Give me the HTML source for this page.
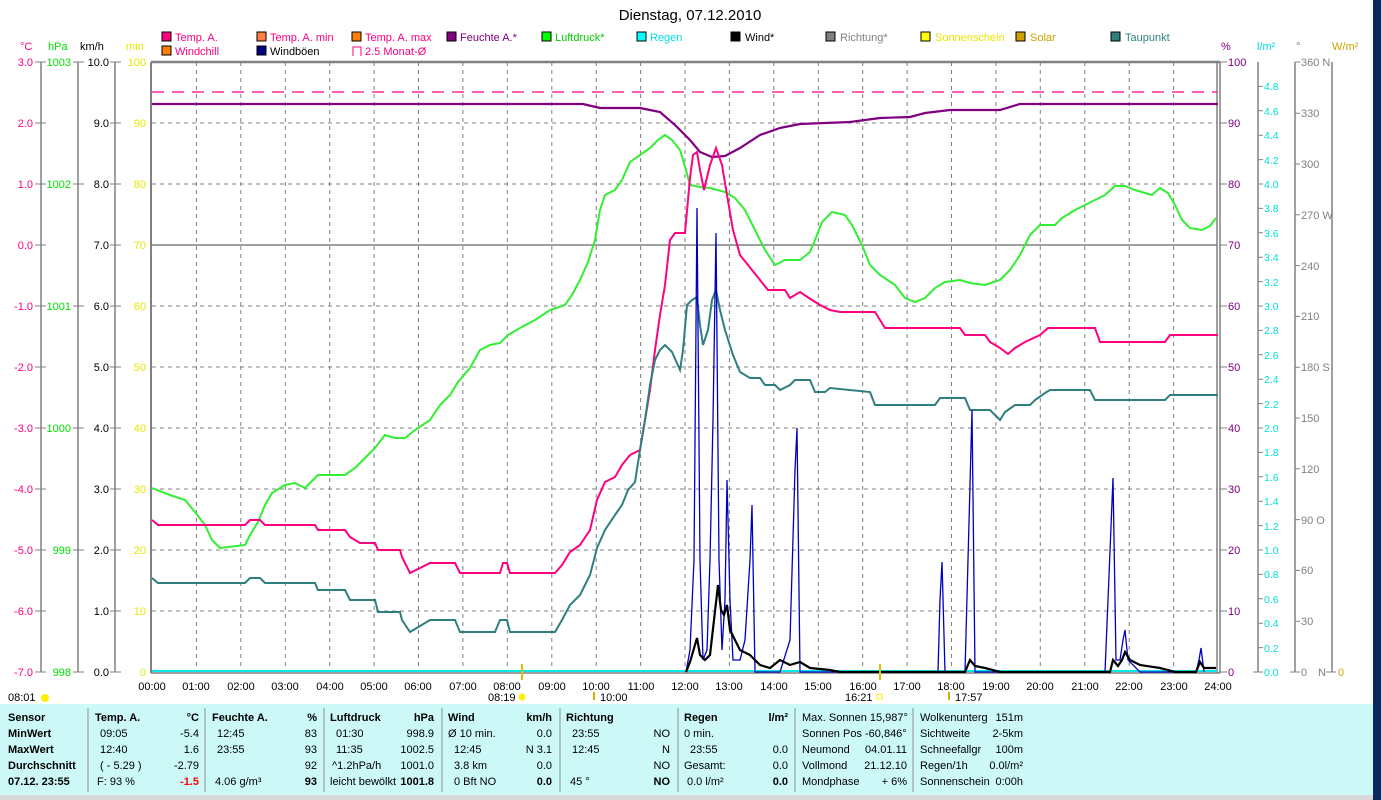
<!DOCTYPE html>
<html><head><meta charset="utf-8"><style>
html,body{margin:0;padding:0;background:#fff;width:1381px;height:800px;overflow:hidden}
svg{display:block;font-family:"Liberation Sans",sans-serif}
</style></head><body>
<svg width="1381" height="800" viewBox="0 0 1381 800" xmlns="http://www.w3.org/2000/svg" font-size="11">
<rect x="0" y="0" width="1381" height="800" fill="#fff"/>
<rect x="1373" y="0" width="8" height="800" fill="#0a2a5a"/>
<text x="690" y="20" font-size="15" text-anchor="middle">Dienstag, 07.12.2010</text>

<!-- legend -->
<g font-size="11">
<rect x="162" y="32" width="9" height="9" fill="#ff0080" stroke="#000"/><text x="175" y="41" fill="#ff0080">Temp. A.</text>
<rect x="257" y="32" width="9" height="9" fill="#ff8040" stroke="#000"/><text x="270" y="41" fill="#ff0080">Temp. A. min</text>
<rect x="352" y="32" width="9" height="9" fill="#ff8000" stroke="#000"/><text x="365" y="41" fill="#ff0080">Temp. A. max</text>
<rect x="447" y="32" width="9" height="9" fill="#800080" stroke="#000"/><text x="460" y="41" fill="#800080">Feuchte A.*</text>
<rect x="542" y="32" width="9" height="9" fill="#00ff00" stroke="#000"/><text x="555" y="41" fill="#00cc00">Luftdruck*</text>
<rect x="637" y="32" width="9" height="9" fill="#00ffff" stroke="#000"/><text x="650" y="41" fill="#00e0e0">Regen</text>
<rect x="731" y="32" width="9" height="9" fill="#000" stroke="#000"/><text x="745" y="41" fill="#000">Wind*</text>
<rect x="826" y="32" width="9" height="9" fill="#808080" stroke="#000"/><text x="840" y="41" fill="#808080">Richtung*</text>
<rect x="921" y="32" width="9" height="9" fill="#ffff00" stroke="#000"/><text x="935" y="41" fill="#e8e800">Sonnenschein</text>
<rect x="1016" y="32" width="9" height="9" fill="#d0a000" stroke="#000"/><text x="1030" y="41" fill="#d0a000">Solar</text>
<rect x="1111" y="32" width="9" height="9" fill="#2f7f7f" stroke="#000"/><text x="1125" y="41" fill="#2f7f7f">Taupunkt</text>
<rect x="162" y="46" width="9" height="9" fill="#ff8000" stroke="#000"/><text x="175" y="55" fill="#ff0080">Windchill</text>
<rect x="257" y="46" width="9" height="9" fill="#000080" stroke="#000"/><text x="270" y="55" fill="#000">Windböen</text>
<path d="M353 56V47H361V56" fill="none" stroke="#ff0080"/><text x="365" y="55" fill="#ff0080">2.5 Monat-Ø</text>
</g>

<!-- axis headers -->
<text x="20" y="50" fill="#ff0080">°C</text>
<text x="48" y="50" fill="#00dd00">hPa</text>
<text x="80" y="50" fill="#000">km/h</text>
<text x="126" y="50" fill="#e8e800">min</text>
<text x="1221" y="50" fill="#800080">%</text>
<text x="1257" y="50" fill="#00e0e0">l/m²</text>
<text x="1296" y="50" fill="#808080">°</text>
<text x="1332" y="50" fill="#d0a000">W/m²</text>

<!-- left axes -->
<g stroke="#808080" stroke-width="1.5">
<line x1="41" y1="62" x2="41" y2="672"/><line x1="78" y1="62" x2="78" y2="672"/><line x1="115" y1="62" x2="115" y2="672"/>
<line x1="1258" y1="62" x2="1258" y2="672"/><line x1="1295" y1="62" x2="1295" y2="672"/><line x1="1332" y1="62" x2="1332" y2="672"/>
</g>
<g font-size="11" text-anchor="end">
<g fill="#ff0080"><text x="33" y="66">3.0</text><text x="33" y="127">2.0</text><text x="33" y="188">1.0</text><text x="33" y="249">0.0</text><text x="33" y="310">-1.0</text><text x="33" y="371">-2.0</text><text x="33" y="432">-3.0</text><text x="33" y="493">-4.0</text><text x="33" y="554">-5.0</text><text x="33" y="615">-6.0</text><text x="33" y="676">-7.0</text></g>
<g fill="#00dd00"><text x="71" y="66">1003</text><text x="71" y="188">1002</text><text x="71" y="310">1001</text><text x="71" y="432">1000</text><text x="71" y="554">999</text><text x="71" y="676">998</text></g>
<g fill="#000"><text x="109" y="66">10.0</text><text x="109" y="127">9.0</text><text x="109" y="188">8.0</text><text x="109" y="249">7.0</text><text x="109" y="310">6.0</text><text x="109" y="371">5.0</text><text x="109" y="432">4.0</text><text x="109" y="493">3.0</text><text x="109" y="554">2.0</text><text x="109" y="615">1.0</text><text x="109" y="676">0.0</text></g>
<g fill="#e8e800"><text x="146" y="66">100</text><text x="146" y="127">90</text><text x="146" y="188">80</text><text x="146" y="249">70</text><text x="146" y="310">60</text><text x="146" y="371">50</text><text x="146" y="432">40</text><text x="146" y="493">30</text><text x="146" y="554">20</text><text x="146" y="615">10</text><text x="146" y="676">0</text></g>
</g>
<g stroke="#808080">
<path d="M35 62h11M35 123h11M35 184h11M35 245h11M35 306h11M35 367h11M35 428h11M35 489h11M35 550h11M35 611h11M35 672h11"/>
<path d="M73 62h11M73 184h11M73 306h11M73 428h11M73 550h11M73 672h11"/>
<path d="M110 62h11M110 123h11M110 184h11M110 245h11M110 306h11M110 367h11M110 428h11M110 489h11M110 550h11M110 611h11M110 672h11"/>
<path d="M1219 62h8M1219 123h8M1219 184h8M1219 245h8M1219 306h8M1219 367h8M1219 428h8M1219 489h8M1219 550h8M1219 611h8M1219 672h8"/>
<path d="M1253 672h10M1258 647.6h5M1258 623.2h5M1258 598.8h5M1258 574.4h5M1258 550h5M1258 525.6h5M1258 501.2h5M1258 476.8h5M1258 452.4h5M1258 428h5M1258 403.6h5M1258 379.2h5M1258 354.8h5M1258 330.4h5M1258 306h5M1258 281.6h5M1258 257.2h5M1258 232.8h5M1258 208.4h5M1258 184h5M1258 159.6h5M1258 135.2h5M1258 110.8h5M1258 86.4h5"/>
<path d="M1290 672h10M1295 621.2h5M1295 570.4h5M1295 519.6h5M1295 468.8h5M1295 418h5M1295 367.2h5M1295 316.4h5M1295 265.6h5M1295 214.8h5M1295 164h5M1295 113.2h5M1295 62h5M1326 672h10"/>
</g>
<g font-size="11">
<g fill="#800080"><text x="1228" y="66">100</text><text x="1228" y="127">90</text><text x="1228" y="188">80</text><text x="1228" y="249">70</text><text x="1228" y="310">60</text><text x="1228" y="371">50</text><text x="1228" y="432">40</text><text x="1228" y="493">30</text><text x="1228" y="554">20</text><text x="1228" y="615">10</text><text x="1228" y="676">0</text></g>
<g fill="#00e0e0" font-size="10.5"><text x="1264" y="676">0.0</text><text x="1264" y="652">0.2</text><text x="1264" y="627">0.4</text><text x="1264" y="603">0.6</text><text x="1264" y="578">0.8</text><text x="1264" y="554">1.0</text><text x="1264" y="530">1.2</text><text x="1264" y="505">1.4</text><text x="1264" y="481">1.6</text><text x="1264" y="456">1.8</text><text x="1264" y="432">2.0</text><text x="1264" y="408">2.2</text><text x="1264" y="383">2.4</text><text x="1264" y="359">2.6</text><text x="1264" y="334">2.8</text><text x="1264" y="310">3.0</text><text x="1264" y="286">3.2</text><text x="1264" y="261">3.4</text><text x="1264" y="237">3.6</text><text x="1264" y="212">3.8</text><text x="1264" y="188">4.0</text><text x="1264" y="164">4.2</text><text x="1264" y="139">4.4</text><text x="1264" y="115">4.6</text><text x="1264" y="90">4.8</text></g>
<g fill="#808080"><text x="1301" y="66">360 N</text><text x="1301" y="117">330</text><text x="1301" y="168">300</text><text x="1301" y="219">270 W</text><text x="1301" y="270">240</text><text x="1301" y="320">210</text><text x="1301" y="371">180 S</text><text x="1301" y="422">150</text><text x="1301" y="473">120</text><text x="1301" y="524">90  O</text><text x="1301" y="574">60</text><text x="1301" y="625">30</text><text x="1301" y="676">0</text><text x="1318" y="676">N</text></g>
<text x="1338" y="676" fill="#d0a000">0</text>
</g>

<!-- plot grid -->
<g stroke="#808080" stroke-dasharray="4,4" stroke-width="1">
<path d="M152 123H1217M152 184H1217M152 306H1217M152 367H1217M152 428H1217M152 489H1217M152 550H1217M152 611H1217"/>
<path d="M196.4 62V672M240.8 62V672M285.3 62V672M329.7 62V672M374.1 62V672M418.5 62V672M462.9 62V672M507.3 62V672M551.8 62V672M596.2 62V672M640.6 62V672M685 62V672M729.4 62V672M773.8 62V672M818.3 62V672M862.7 62V672M907.1 62V672M951.5 62V672M995.9 62V672M1040.3 62V672M1084.8 62V672M1129.2 62V672M1173.6 62V672"/>
</g>
<line x1="152" y1="245" x2="1217" y2="245" stroke="#808080" stroke-width="1.5"/>
<g stroke="#808080" fill="none">
<line x1="151" y1="62" x2="1220" y2="62" stroke-width="2.5"/>
<line x1="151" y1="62" x2="151" y2="673" stroke-width="2"/>
<line x1="1217" y1="62" x2="1217" y2="673" stroke-width="1.5"/>
<line x1="1220" y1="62" x2="1220" y2="673" stroke-width="1.5"/>
<line x1="151" y1="673" x2="1220" y2="673" stroke-width="1.5"/>
</g>
<line x1="152" y1="92" x2="1217" y2="92" stroke="#ff0080" stroke-dasharray="12,8" stroke-width="1.3"/>
<line x1="152" y1="671" x2="1217" y2="671" stroke="#00e8e8" stroke-width="2"/>

<!-- humidity -->
<polyline fill="none" stroke="#800080" stroke-width="2.2" points="152,104 583,104 600,108 640,108 660,112 675,125 690,140 700,152 712,157 725,156 740,148 760,135 780,128 800,124 850,122 880,118 910,117 925,113 950,110 1000,110 1020,104 1218,104"/>
<!-- pressure -->
<polyline fill="none" stroke="#33ee33" stroke-width="2" points="152,488 170,495 185,500 195,512 205,525 212,540 220,548 245,545 250,535 258,522 265,505 272,493 285,485 295,483 305,488 318,475 345,475 355,468 365,458 375,448 385,435 395,438 405,438 415,430 430,420 440,405 450,395 458,382 470,368 480,350 490,345 500,343 508,335 520,328 535,320 550,310 565,305 572,295 580,280 588,262 595,240 600,210 605,195 615,190 622,180 630,162 640,155 650,148 658,140 665,135 672,140 680,150 686,170 690,185 700,187 710,188 725,192 735,198 745,210 755,230 765,250 775,265 785,260 800,260 810,252 815,240 822,222 832,212 845,215 852,225 862,245 870,265 880,275 895,285 905,298 915,302 925,298 935,288 945,282 960,280 970,283 985,285 1000,280 1010,270 1020,255 1030,235 1040,225 1055,225 1062,218 1075,210 1085,205 1095,200 1105,195 1115,186 1125,186 1135,190 1145,193 1152,195 1160,188 1168,193 1175,205 1182,220 1190,228 1202,230 1210,226 1216,218"/>
<!-- temp -->
<polyline fill="none" stroke="#ff0080" stroke-width="2" points="152,520 158,525 245,525 250,520 260,520 265,525 315,525 318,530 345,530 350,537 360,543 375,543 378,550 400,550 402,557 410,573 430,563 455,563 460,573 500,573 503,563 507,563 510,573 555,573 562,565 570,552 580,545 590,530 597,500 605,482 615,477 622,465 630,455 640,450 645,420 650,390 655,350 660,315 665,285 670,240 675,233 685,233 690,178 693,155 697,152 700,170 704,190 710,165 716,148 722,165 727,195 733,230 740,255 748,265 760,280 768,290 785,290 790,298 800,292 812,300 820,305 830,310 840,312 875,312 880,320 885,328 960,328 965,335 985,335 990,342 1000,348 1008,354 1015,348 1025,342 1040,335 1048,328 1095,328 1100,342 1165,342 1170,335 1218,335"/>
<!-- dew point -->
<polyline fill="none" stroke="#2f7f7f" stroke-width="2" points="152,578 158,583 245,583 250,578 260,578 265,583 315,583 318,590 345,590 350,600 375,600 378,612 400,612 402,620 410,632 430,620 455,620 460,632 495,632 500,620 507,620 510,632 555,632 562,620 570,605 580,595 590,575 597,548 605,530 615,515 622,505 628,490 635,482 640,450 645,420 650,385 655,360 660,350 665,345 672,352 680,370 683,350 687,305 692,300 697,297 700,325 703,345 708,330 712,300 716,290 720,310 725,330 733,355 740,372 750,378 760,378 765,385 775,385 780,390 790,385 795,380 810,380 815,392 825,392 830,388 870,392 875,405 935,405 940,398 965,398 970,410 990,410 1000,420 1005,412 1015,405 1030,405 1035,400 1045,393 1050,390 1090,390 1095,400 1165,400 1170,395 1218,395"/>
<!-- wind gusts -->
<polyline fill="none" stroke="#0000c0" stroke-width="1.3" points="686,672 690,650 694,560 697,208 700,560 703,660 707,650 710,560 713,420 716,233 719,560 722,650 725,600 727,480 730,600 733,660 740,660 745,640 750,560 752,505 755,672 780,672 790,640 795,470 797,428 800,672 938,672 940,600 942,562 945,672 965,672 968,560 972,410 975,672 1105,672 1108,600 1113,478 1116,660 1120,660 1123,640 1125,630 1128,660 1140,672 1196,672 1199,660 1201,648 1204,672"/>
<!-- wind -->
<polyline fill="none" stroke="#000" stroke-width="2.2" points="686,672 690,662 697,638 700,655 705,660 710,655 714,620 718,585 721,610 724,615 727,605 730,630 735,640 740,650 750,655 760,665 770,668 780,660 790,665 800,662 810,668 830,670 840,672 965,672 970,660 975,666 985,668 1000,672 1110,672 1113,660 1118,666 1122,660 1125,652 1130,660 1140,665 1160,668 1175,672 1196,672 1200,662 1204,668 1216,668"/>
<!-- sun markers -->
<line x1="522" y1="664" x2="522" y2="680" stroke="#e0c000" stroke-width="2"/>
<line x1="880" y1="664" x2="880" y2="680" stroke="#e0c000" stroke-width="2"/>

<!-- x labels -->
<g font-size="11" text-anchor="middle" fill="#000">
<text x="152" y="690">00:00</text><text x="196" y="690">01:00</text><text x="241" y="690">02:00</text><text x="285" y="690">03:00</text><text x="330" y="690">04:00</text><text x="374" y="690">05:00</text><text x="418" y="690">06:00</text><text x="463" y="690">07:00</text><text x="507" y="690">08:00</text><text x="552" y="690">09:00</text><text x="596" y="690">10:00</text><text x="641" y="690">11:00</text><text x="685" y="690">12:00</text><text x="729" y="690">13:00</text><text x="774" y="690">14:00</text><text x="818" y="690">15:00</text><text x="863" y="690">16:00</text><text x="907" y="690">17:00</text><text x="951" y="690">18:00</text><text x="996" y="690">19:00</text><text x="1040" y="690">20:00</text><text x="1085" y="690">21:00</text><text x="1129" y="690">22:00</text><text x="1174" y="690">23:00</text><text x="1218" y="690">24:00</text>
</g>
<g font-size="11">
<text x="8" y="701">08:01</text><circle cx="45" cy="698" r="4" fill="#ffee00"/>
<text x="488" y="701">08:19</text><circle cx="522" cy="697" r="3.5" fill="#ffee00"/>
<text x="600" y="701">10:00</text><path d="M594 692v8" stroke="#d0b000" stroke-width="2"/>
<text x="845" y="701">16:21</text><rect x="877" y="694" width="5" height="5" fill="none" stroke="#ffee00"/>
<text x="955" y="701">17:57</text><path d="M949 692v8" stroke="#d0b000" stroke-width="2"/>
</g>

<!-- table -->
<rect x="0" y="704" width="1373" height="91" fill="#ccf8f8"/>
<rect x="0" y="795" width="1373" height="5" fill="#d8d8d8"/>
<g stroke="#909090"><path d="M88 708V792M205 708V792M324 708V792M442 708V792M560 708V792M678 708V792M795 708V792M913 708V792"/></g>
<g font-size="11" fill="#000">
<g font-weight="bold"><text x="8" y="721">Sensor</text><text x="8" y="737">MinWert</text><text x="8" y="753">MaxWert</text><text x="8" y="769">Durchschnitt</text><text x="8" y="785">07.12. 23:55</text>
<text x="95" y="721">Temp. A.</text><text x="199" y="721" text-anchor="end">°C</text>
<text x="212" y="721">Feuchte A.</text><text x="317" y="721" text-anchor="end">%</text>
<text x="330" y="721">Luftdruck</text><text x="434" y="721" text-anchor="end">hPa</text>
<text x="448" y="721">Wind</text><text x="552" y="721" text-anchor="end">km/h</text>
<text x="566" y="721">Richtung</text>
<text x="684" y="721">Regen</text><text x="788" y="721" text-anchor="end">l/m²</text>
<text x="199" y="785" text-anchor="end" fill="#ff0000">-1.5</text><text x="317" y="785" text-anchor="end">93</text><text x="434" y="785" text-anchor="end">1001.8</text><text x="552" y="785" text-anchor="end">0.0</text><text x="670" y="785" text-anchor="end">NO</text><text x="788" y="785" text-anchor="end">0.0</text>
</g>
<text x="100" y="737">09:05</text><text x="199" y="737" text-anchor="end">-5.4</text>
<text x="100" y="753">12:40</text><text x="199" y="753" text-anchor="end">1.6</text>
<text x="100" y="769">( - 5.29 )</text><text x="199" y="769" text-anchor="end">-2.79</text>
<text x="97" y="785">F: 93 %</text>
<text x="217" y="737">12:45</text><text x="317" y="737" text-anchor="end">83</text>
<text x="217" y="753">23:55</text><text x="317" y="753" text-anchor="end">93</text>
<text x="317" y="769" text-anchor="end">92</text>
<text x="215" y="785">4.06 g/m³</text>
<text x="336" y="737">01:30</text><text x="434" y="737" text-anchor="end">998.9</text>
<text x="336" y="753">11:35</text><text x="434" y="753" text-anchor="end">1002.5</text>
<text x="332" y="769">^1.2hPa/h</text><text x="434" y="769" text-anchor="end">1001.0</text>
<text x="330" y="785">leicht bewölkt</text>
<text x="448" y="737">Ø 10 min.</text><text x="552" y="737" text-anchor="end">0.0</text>
<text x="454" y="753">12:45</text><text x="552" y="753" text-anchor="end">N 3.1</text>
<text x="454" y="769">3.8 km</text><text x="552" y="769" text-anchor="end">0.0</text>
<text x="454" y="785">0 Bft NO</text>
<text x="572" y="737">23:55</text><text x="670" y="737" text-anchor="end">NO</text>
<text x="572" y="753">12:45</text><text x="670" y="753" text-anchor="end">N</text>
<text x="670" y="769" text-anchor="end">NO</text>
<text x="570" y="785">45 °</text>
<text x="684" y="737">0 min.</text>
<text x="690" y="753">23:55</text><text x="788" y="753" text-anchor="end">0.0</text>
<text x="684" y="769">Gesamt:</text><text x="788" y="769" text-anchor="end">0.0</text>
<text x="687" y="785">0.0 l/m²</text>
<text x="802" y="721">Max. Sonnen 15,987°</text>
<text x="802" y="737">Sonnen Pos  -60,846°</text>
<text x="802" y="753">Neumond</text><text x="907" y="753" text-anchor="end">04.01.11</text>
<text x="802" y="769">Vollmond</text><text x="907" y="769" text-anchor="end">21.12.10</text>
<text x="802" y="785">Mondphase</text><text x="907" y="785" text-anchor="end">+ 6%</text>
<text x="920" y="721">Wolkenunterg</text><text x="1023" y="721" text-anchor="end">151m</text>
<text x="920" y="737">Sichtweite</text><text x="1023" y="737" text-anchor="end">2-5km</text>
<text x="920" y="753">Schneefallgr</text><text x="1023" y="753" text-anchor="end">100m</text>
<text x="920" y="769">Regen/1h</text><text x="1023" y="769" text-anchor="end">0.0l/m²</text>
<text x="920" y="785">Sonnenschein</text><text x="1023" y="785" text-anchor="end">0:00h</text>
</g>
</svg>
</body></html>
